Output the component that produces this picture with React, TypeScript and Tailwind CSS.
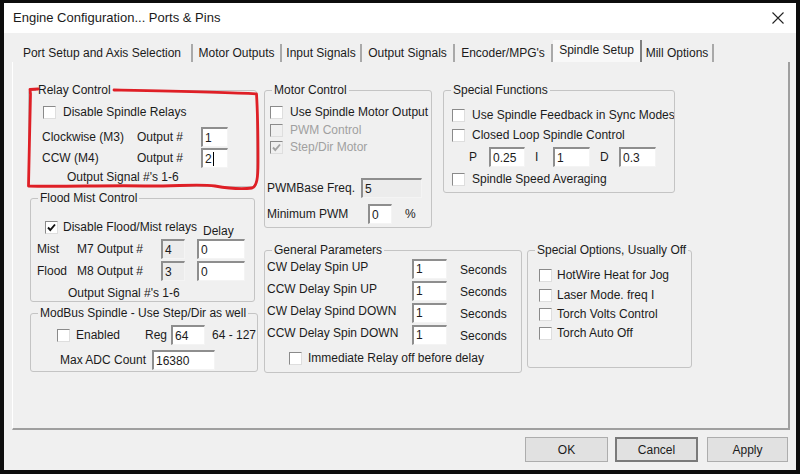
import React from "react";

type Kids = { children?: React.ReactNode; className?: string };

function Group({ title, className = "", children }: Kids & { title: string }) {
  return (
    <fieldset className={`min-w-0 shrink-0 rounded-[3px] border border-[#c4c4c4] ${className}`}>
      <legend className="ml-[7px] px-[2px] leading-[14px]">{title}</legend>
      {children}
    </fieldset>
  );
}

function Check({ checked, disabled }: { checked?: boolean; disabled?: boolean }) {
  return (
    <span
      className={`flex h-[13px] w-[13px] shrink-0 items-center justify-center border border-t-[#8a8a8a] border-l-[#8a8a8a] border-r-[#dedede] border-b-[#dedede] ${
        disabled ? "bg-[#f0f0f0]" : "bg-white"
      }`}
    >
      {checked && (
        <svg width="11" height="11" viewBox="0 0 11 11">
          <path
            d="M2 5.5 L4.3 8 L9 2.5"
            fill="none"
            stroke={disabled ? "#a3a3a3" : "#111"}
            strokeWidth="1.9"
          />
        </svg>
      )}
    </span>
  );
}

function Field({ children, className = "", grey, caret }: Kids & { grey?: boolean; caret?: boolean }) {
  return (
    <div
      className={`flex h-[20px] shrink-0 items-center border-t-2 border-l-2 border-t-[#8e8e8e] border-l-[#8e8e8e] border-r border-b border-r-[#f4f4f4] border-b-[#f4f4f4] pl-[2px] ${
        grey ? "bg-[#ececec]" : "bg-white"
      } ${className}`}
    >
      {children}
      {caret && <span className="ml-[1px] h-[14px] w-[1px] bg-black" />}
    </div>
  );
}

function CheckRow({ label, className = "", checked, disabled, gap = "ml-[7px]" }: {
  label: string;
  className?: string;
  checked?: boolean;
  disabled?: boolean;
  gap?: string;
}) {
  return (
    <div className={`flex h-[16px] items-center whitespace-nowrap ${className}`}>
      <Check checked={checked} disabled={disabled} />
      <span className={`${gap} ${disabled ? "text-[#a0a0a0]" : ""}`}>{label}</span>
    </div>
  );
}

const tabs = [
  { label: "Port Setup and Axis Selection", w: "w-[180px]" },
  { label: "Motor Outputs", w: "w-[89px]" },
  { label: "Input Signals", w: "w-[80px]" },
  { label: "Output Signals", w: "w-[93px]" },
  { label: "Encoder/MPG's", w: "w-[98px]" },
  { label: "Spindle Setup", w: "w-[89px]", active: true },
  { label: "Mill Options", w: "w-[72px]" },
];

const delays = [
  "CW Delay Spin UP",
  "CCW Delay Spin UP",
  "CW Delay Spind DOWN",
  "CCW Delay Spin DOWN",
];

export default function App() {
  return (
    <div className="relative h-[474px] w-[800px] bg-[#0d0d0d] px-[4px] pt-[3px] pb-[4px] font-[Liberation_Sans,Arial,sans-serif] text-[12px] leading-[14px] text-[#1b1b1b]">
      <div className="flex h-full flex-col bg-[#f0f0f0]">
        {/* Title bar */}
        <div className="flex h-[30px] items-center justify-between bg-white pl-[9px] pr-[12px]">
          <span className="text-[13px]">Engine Configuration... Ports &amp; Pins</span>
          <svg width="12" height="12" viewBox="0 0 12 12">
            <path d="M0.5 0.5 L11.5 11.5 M11.5 0.5 L0.5 11.5" stroke="#222" strokeWidth="1.1" />
          </svg>
        </div>

        {/* Tabs */}
        <div className="mt-[7px] flex h-[22px] items-end pl-[9px]">
          {tabs.map((t) =>
            t.active ? (
              <div
                key={t.label}
                className={`${t.w} flex h-[22px] items-center justify-center border-r-2 border-r-[#7f7f7f] bg-[#f8f8f8] pb-[2px] whitespace-nowrap`}
              >
                {t.label}
              </div>
            ) : (
              <div
                key={t.label}
                className={`${t.w} flex h-[18px] items-center justify-center border-r-2 border-r-[#a9a9a9] whitespace-nowrap`}
              >
                {t.label}
              </div>
            )
          )}
        </div>

        {/* Tab panel */}
        <div className="ml-[8px] mr-[6px] h-[368px] border-l border-l-white border-r-2 border-b-2 border-r-[#9f9f9f] border-b-[#9f9f9f]">
          <div className="flex pt-[21px] pl-[15px]">
            {/* left column */}
            <div className="flex w-[229px] shrink-0 flex-col">
              <Group title="Relay Control" className="h-[104px] w-[229px]">
                <CheckRow label="Disable Spindle Relays" className="mt-[7px] pl-[14px]" />
                <div className="mt-[7px] flex h-[20px] items-center pl-[13px]">
                  <span className="w-[95px]">Clockwise (M3)</span>
                  <span className="w-[64px]">Output #</span>
                  <Field className="w-[27px]">1</Field>
                </div>
                <div className="mt-[1px] flex h-[20px] items-center pl-[13px]">
                  <span className="w-[95px]">CCW (M4)</span>
                  <span className="w-[64px]">Output #</span>
                  <Field className="w-[27px]" caret>
                    2
                  </Field>
                </div>
                <div className="mt-[2px] h-[14px] pl-[38px]">Output Signal #'s 1-6</div>
              </Group>

              <Group title="Flood Mist Control" className="mt-[4px] ml-[2px] h-[111px] w-[225px]">
                <div className="mt-[14px] flex h-[16px] items-center pl-[14px] whitespace-nowrap">
                  <Check checked />
                  <span className="ml-[5px] w-[140px]">Disable Flood/Mist relays</span>
                  <span className="pt-[8px]">Delay</span>
                </div>
                <div className="mt-[4px] flex h-[20px] items-center pl-[6px]">
                  <span className="w-[40px]">Mist</span>
                  <span className="w-[84px]">M7 Output #</span>
                  <Field className="w-[24px]" grey>
                    4
                  </Field>
                  <Field className="ml-[12px] w-[48px]">0</Field>
                </div>
                <div className="mt-[2px] flex h-[20px] items-center pl-[6px]">
                  <span className="w-[40px]">Flood</span>
                  <span className="w-[84px]">M8 Output #</span>
                  <Field className="w-[24px]" grey>
                    3
                  </Field>
                  <Field className="ml-[12px] w-[48px]">0</Field>
                </div>
                <div className="mt-[5px] h-[14px] pl-[37px]">Output Signal #'s 1-6</div>
              </Group>

              <Group title="ModBus Spindle - Use Step/Dir as well" className="mt-[4px] ml-[2px] h-[66px] w-[228px]">
                <div className="mt-[5px] flex h-[20px] items-center pl-[26px] whitespace-nowrap">
                  <Check />
                  <span className="ml-[6px] w-[69px]">Enabled</span>
                  <span className="w-[26px]">Reg</span>
                  <Field className="w-[34px]">64</Field>
                  <span className="ml-[7px]">64 - 127</span>
                </div>
                <div className="mt-[5px] flex h-[20px] items-center pl-[29px]">
                  <span className="w-[92px]">Max ADC Count</span>
                  <Field className="w-[63px]">16380</Field>
                </div>
              </Group>
            </div>

            {/* right area */}
            <div className="ml-[7px] flex flex-col">
              <div className="flex items-start">
                <Group title="Motor Control" className="h-[145px] w-[168px]">
                  <CheckRow label="Use Spindle Motor Output" className="mt-[7px] pl-[5px]" />
                  <CheckRow label="PWM Control" className="mt-[2px] pl-[5px]" disabled />
                  <CheckRow label="Step/Dir Motor" className="mt-[1px] pl-[5px]" disabled checked />
                  <div className="mt-[23px] flex h-[20px] items-center pl-[2px]">
                    <span className="w-[94px]">PWMBase Freq.</span>
                    <Field className="w-[61px]" grey>
                      5
                    </Field>
                  </div>
                  <div className="mt-[6px] flex h-[20px] items-center pl-[2px]">
                    <span className="w-[101px]">Minimum PWM</span>
                    <Field className="w-[24px]">0</Field>
                    <span className="ml-[13px]">%</span>
                  </div>
                </Group>

                <Group title="Special Functions" className="ml-[11px] h-[110px] w-[232px]">
                  <CheckRow
                    label="Use Spindle Feedback in Sync Modes"
                    className="mt-[10px] overflow-hidden pl-[8px]"
                  />
                  <CheckRow label="Closed Loop Spindle Control" className="mt-[4px] pl-[8px]" />
                  <div className="mt-[4px] flex h-[20px] items-center pl-[25px]">
                    <span className="w-[20px]">P</span>
                    <Field className="w-[36px]">0.25</Field>
                    <span className="ml-[10px] w-[18px]">I</span>
                    <Field className="w-[37px]">1</Field>
                    <span className="ml-[10px] w-[19px]">D</span>
                    <Field className="w-[37px]">0.3</Field>
                  </div>
                  <CheckRow label="Spindle Speed Averaging" className="mt-[4px] pl-[8px]" />
                </Group>
              </div>

              <div className="mt-[15px] flex items-start">
                <Group title="General Parameters" className="h-[130px] w-[258px]">
                  {delays.map((d) => (
                    <div key={d} className="mt-[1px] flex h-[21px] items-center pl-[2px] whitespace-nowrap">
                      <span className="-mt-[4px] w-[145px]">{d}</span>
                      <Field className="w-[35px]">1</Field>
                      <span className="mt-[3px] ml-[13px]">Seconds</span>
                    </div>
                  ))}
                  <CheckRow
                    label="Immediate Relay off before delay"
                    className="mt-[5px] pl-[24px]"
                    gap="ml-[6px]"
                  />
                </Group>

                <Group title="Special Options, Usually Off" className="ml-[5px] h-[125px] w-[165px]">
                  <CheckRow label="HotWire Heat for Jog" className="mt-[10px] pl-[11px]" gap="ml-[5px]" />
                  <CheckRow label="Laser Mode. freq I" className="mt-[4px] pl-[11px]" gap="ml-[5px]" />
                  <CheckRow label="Torch Volts Control" className="mt-[3px] pl-[11px]" gap="ml-[5px]" />
                  <CheckRow label="Torch Auto Off" className="mt-[3px] pl-[11px]" gap="ml-[5px]" />
                </Group>
              </div>
            </div>
          </div>
        </div>

        {/* Buttons */}
        <div className="mt-[7px] flex justify-end pr-[8px]">
          <button className="flex h-[25px] w-[83px] items-center justify-center border border-[#adadad] bg-[#e1e1e1]">
            OK
          </button>
          <button className="ml-[7px] flex h-[25px] w-[83px] items-center justify-center border-2 border-[#7a7a7a] bg-[#e1e1e1]">
            Cancel
          </button>
          <button className="ml-[9px] flex h-[25px] w-[81px] items-center justify-center border border-[#adadad] bg-[#e1e1e1]">
            Apply
          </button>
        </div>
      </div>

      {/* hand-drawn red annotation */}
      <svg
        className="pointer-events-none absolute inset-0"
        width="800"
        height="474"
        viewBox="0 0 800 474"
      >
        <path
          d="M38 89 L30 89.5 L30.5 94 C30 120 29 158 28.5 186 C60 187 110 185 150 186 C180 186 200 184 215 186 C232 189 245 189 252 188 C257 186 258 178 258 162 C258 130 257.5 110 256.5 94 C230 92 170 91 114 90"
          fill="none"
          stroke="#df1f26"
          strokeWidth="2.8"
          strokeLinecap="round"
          strokeLinejoin="round"
        />
      </svg>
    </div>
  );
}
